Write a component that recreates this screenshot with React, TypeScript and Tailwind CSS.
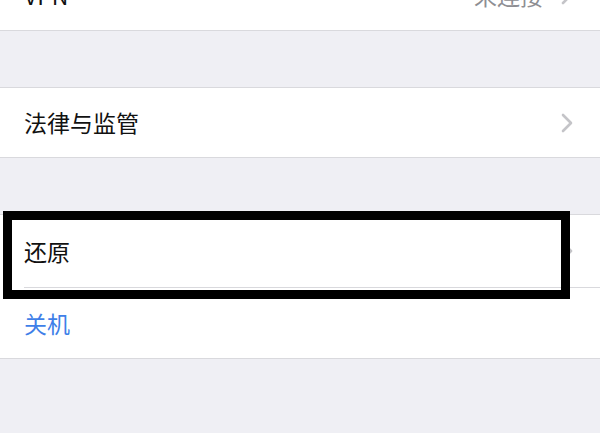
import React from "react";

const font = { fontFamily: '"Noto Sans CJK SC", "Noto Sans", sans-serif' };

function Chevron() {
  return (
    <svg width="12" height="20" viewBox="0 0 12 20" className="shrink-0">
      <polyline
        points="2,2 10,10 2,18"
        fill="none"
        stroke="#c4c4c8"
        strokeWidth="2.6"
        strokeLinecap="round"
        strokeLinejoin="round"
      />
    </svg>
  );
}

function Row({
  label,
  value,
  chevron = true,
  blue = false,
  height,
}: {
  label: string;
  value?: string;
  chevron?: boolean;
  blue?: boolean;
  height: string;
}) {
  return (
    <div className={`flex items-center pl-6 pr-[27px] ${height}`}>
      <span
        className={`flex-1 text-[23px] leading-none ${blue ? "text-[#3f7fe8]" : "text-[#111111]"}`}
      >
        {label}
      </span>
      {value && <span className="mr-[18px] text-[23px] leading-none text-[#8e8e93]">{value}</span>}
      {chevron && <Chevron />}
    </div>
  );
}

export default function App() {
  return (
    <div className="w-[600px] h-[433px] overflow-hidden bg-[#efeff4]" style={font}>
      {/* Network group (scrolled partially off the top) */}
      <div className="-mt-[40px] bg-white border-b border-[#d9d9dd]">
        <Row label="VPN" value="未连接" height="h-[70px]" />
      </div>

      <div className="h-[56px]" />

      {/* Legal */}
      <div className="bg-white border-y border-[#d9d9dd]">
        <Row label="法律与监管" height="h-[69px]" />
      </div>

      <div className="h-[56px]" />

      {/* Reset / shut down */}
      <div className="relative bg-white border-y border-[#d9d9dd]">
        <div className="ml-6 border-b border-[#d9d9dd]">
          <div className="-ml-6">
            <Row label="还原" height="h-[72px]" />
          </div>
        </div>
        <Row label="关机" chevron={false} blue height="h-[70px]" />

        {/* Highlight frame around the reset row */}
        <div className="absolute left-[3px] top-[-4px] w-[567px] h-[88px] border-[9px] border-black" />
      </div>
    </div>
  );
}
